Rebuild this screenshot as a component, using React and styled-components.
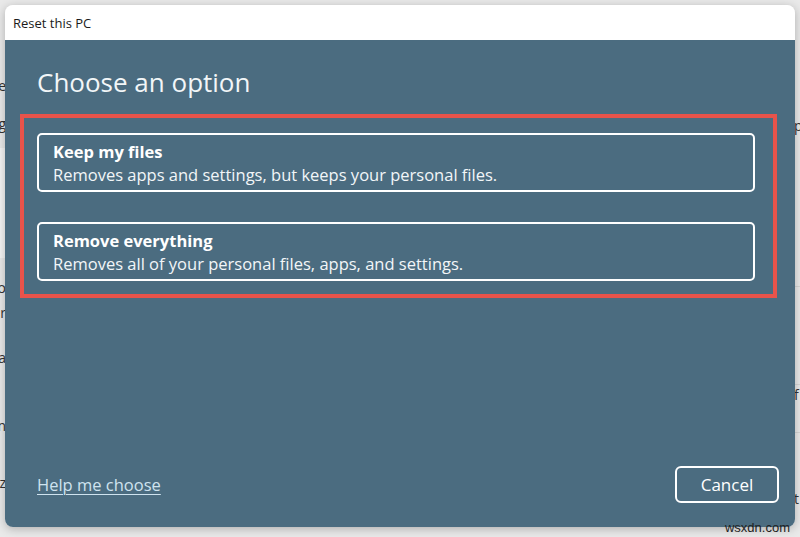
import styled, { createGlobalStyle } from 'styled-components';

const GlobalStyle = createGlobalStyle`
  * { box-sizing: border-box; }
  html, body { margin: 0; padding: 0; }
  body {
    background: #e9e9e9;
    font-family: "Open Sans", "Noto Sans", "Liberation Sans", sans-serif;
  }
`;

const Page = styled.div`
  position: relative;
  width: 800px;
  height: 537px;
  padding: 5px;
  overflow: hidden;
  background: #e9e9e9;
`;

// the settings page peeking out behind the dialog
const Backdrop = styled.div`
  position: absolute;
  inset: 0;
  display: flex;
  justify-content: space-between;
  z-index: 0;
`;

const EdgeStrip = styled.div`
  width: 6px;
  display: flex;
  flex-direction: column;
  overflow: hidden;
  font-size: 14px;
  line-height: 1;
  color: #333;
`;

const EdgeRow = styled.div`
  height: ${p => p.$h}px;
  flex: none;
  display: flex;
  align-items: center;
  justify-content: ${p => (p.$side === 'left' ? 'flex-end' : 'flex-start')};
  background: ${p => (p.$light ? '#f4f4f4' : 'transparent')};
  border-bottom: ${p => (p.$line ? '1px solid #d6d6d6' : 'none')};
  white-space: nowrap;
  overflow: hidden;
`;

const Dialog = styled.div`
  position: relative;
  z-index: 1;
  width: 790px;
  height: 522px;
  border-radius: 8px;
  overflow: hidden;
  display: flex;
  flex-direction: column;
  box-shadow: 0 2px 10px rgba(0, 0, 0, 0.25);
`;

const TitleBar = styled.div`
  height: 35px;
  flex: none;
  background: #ffffff;
  display: flex;
  align-items: center;
  padding-left: 8px;
  font-size: 13px;
  color: #1b1b1b;
`;

const Body = styled.div`
  flex: 1;
  background: #4b6c80;
  display: flex;
  flex-direction: column;
  padding: 0 18px 24px 15px;
  color: #ffffff;
`;

const Heading = styled.h1`
  margin: 26px 0 0 17px;
  font-size: 26px;
  line-height: 32px;
  font-weight: 400;
  color: #f2f6f8;
`;

const Highlight = styled.div`
  margin-top: 16px;
  border: 4px solid #e8534b;
  padding: 15px 18px 13px 13px;
  display: flex;
  flex-direction: column;
  gap: 30px;
`;

const OptionCard = styled.button`
  all: unset;
  display: block;
  border: 2px solid #ffffff;
  border-radius: 5px;
  padding: 5px 14px 4px;
  cursor: pointer;
  font-family: inherit;
`;

const OptionTitle = styled.div`
  font-size: 16.5px;
  line-height: 23px;
  font-weight: 700;
  color: #ffffff;
`;

const OptionText = styled.div`
  font-size: 16.5px;
  line-height: 23px;
  color: #f2f6f8;
`;

const Footer = styled.div`
  margin-top: auto;
  margin-right: -2px;
  padding-left: 17px;
  display: flex;
  align-items: center;
  justify-content: space-between;
`;

const HelpLink = styled.a`
  font-size: 16.5px;
  color: #cfe3ef;
  text-decoration: underline;
  text-underline-offset: 3px;
  text-decoration-thickness: 1px;
  cursor: pointer;
`;

const CancelButton = styled.button`
  width: 104px;
  height: 37px;
  border: 2px solid #ffffff;
  border-radius: 6px;
  background: transparent;
  color: #ffffff;
  font-family: inherit;
  font-size: 17px;
  cursor: pointer;
`;

const Watermark = styled.div`
  position: absolute;
  right: 10px;
  bottom: 2px;
  z-index: 2;
  font-family: "Liberation Sans", Arial, sans-serif;
  font-size: 13px;
  color: #1e1e1e;
`;

const leftRows = [
  { h: 72 },
  { h: 28, t: 'le' },
  { h: 48, t: 'g' },
  { h: 110, light: true },
  { h: 20 },
  { h: 20, t: 'o' },
  { h: 30, t: 'r' },
  { h: 60, t: 'a' },
  { h: 75, t: 'n' },
  { h: 40, t: 'z' },
];

const rightRows = [
  { h: 115 },
  { h: 22, t: 'p' },
  { h: 150, line: true },
  { h: 98, line: true },
  { h: 20, t: 'f' },
  { h: 28, line: true },
  { h: 58 },
  { h: 16, t: 't' },
];

const options = [
  { id: 'keep', title: 'Keep my files', text: 'Removes apps and settings, but keeps your personal files.' },
  { id: 'remove', title: 'Remove everything', text: 'Removes all of your personal files, apps, and settings.' },
];

function App() {
  return (
    <>
      <GlobalStyle />
      <Page>
        <Backdrop>
          <EdgeStrip>
            {leftRows.map((r, i) => (
              <EdgeRow key={i} $h={r.h} $side="left" $light={r.light}>{r.t}</EdgeRow>
            ))}
          </EdgeStrip>
          <EdgeStrip>
            {rightRows.map((r, i) => (
              <EdgeRow key={i} $h={r.h} $side="right" $line={r.line}>{r.t}</EdgeRow>
            ))}
          </EdgeStrip>
        </Backdrop>

        <Dialog>
          <TitleBar>Reset this PC</TitleBar>
          <Body>
            <Heading>Choose an option</Heading>
            <Highlight>
              {options.map(o => (
                <OptionCard key={o.id}>
                  <OptionTitle>{o.title}</OptionTitle>
                  <OptionText>{o.text}</OptionText>
                </OptionCard>
              ))}
            </Highlight>
            <Footer>
              <HelpLink>Help me choose</HelpLink>
              <CancelButton>Cancel</CancelButton>
            </Footer>
          </Body>
        </Dialog>

        <Watermark>wsxdn.com</Watermark>
      </Page>
    </>
  );
}

export default App;
